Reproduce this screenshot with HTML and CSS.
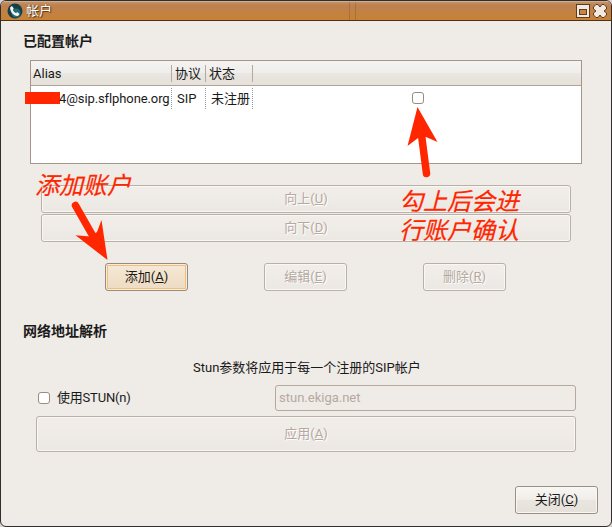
FILE: index.html
```html
<!DOCTYPE html>
<html lang="zh-CN">
<head>
<meta charset="utf-8">
<title>帐户</title>
<link rel="stylesheet" href="styles.css">
</head>
<body>
<div class="window">
  <header class="titlebar">
    <svg class="logo" width="16" height="16" viewBox="0 0 16 16"><circle cx="8" cy="8" r="7.5" fill="#153e48"/><circle cx="9" cy="10" r="4.5" fill="#286b73"/><path d="M3.2 4.2 5 3l1.8 2.4-1 1.5c.6 1.4 1.7 2.5 3 3.2l1.7-.9 2 1.9-1.6 1.8C7 13.300 2.500 8.500 3.200 4.200Z" fill="#f2f7f5"/></svg>
    <span class="title">帐户</span>
    <svg class="controls" width="32" height="15" viewBox="0 0 32 15"><rect x=".5" y=".5" width="13" height="13" fill="#efe9e2" stroke="#603b1b"/><rect x="3.500" y="5.500" width="7" height="5" fill="#c78442" stroke="#603b1b"/><path d="M20 .5h2L24 3l2-2.500h2L30.500 3v2L28 7l2.500 2v2L28 13.500h-2L24 11l-2 2.500h-2L17.500 11V9L20 7l-2.500-2V3Z" fill="#efe9e2" stroke="#603b1b" stroke-linejoin="round"/></svg>
  </header>
  <main class="content">
    <h2 class="heading">已配置帐户</h2>
    <section class="accounts">
      <div class="row head"><span>Alias</span><span>协议</span><span>状态</span><span></span></div>
      <div class="row entry"><span class="alias"><i class="redaction"></i>4@sip.sflphone.org</span><span>SIP</span><span>未注册</span><span class="enabled"><i class="check"></i></span></div>
    </section>
    <div class="order">
      <button class="button disabled">向上(<u>U</u>)</button>
      <button class="button disabled">向下(<u>D</u>)</button>
    </div>
    <div class="actions">
      <button class="button focused">添加(<u>A</u>)</button>
      <button class="button disabled">编辑(<u>E</u>)</button>
      <button class="button disabled">删除(<u>R</u>)</button>
    </div>
    <h2 class="heading">网络地址解析</h2>
    <p class="hint">Stun参数将应用于每一个注册的SIP帐户</p>
    <div class="stun"><i class="check"></i><span class="stun-label">使用STUN(n)</span><div class="field">stun.ekiga.net</div></div>
    <button class="button disabled apply">应用(<u>A</u>)</button>
    <button class="button close">关闭(<u>C</u>)</button>
  </main>
  <div class="note note-add">添加账户</div>
  <div class="note note-check">勾上后会进<br>行账户确认</div>
  <svg class="arrows" width="612" height="527" viewBox="0 0 612 527"><path d="M75.500 205.500 94 238M426.500 173.500 421.500 135" stroke="#ff2600" stroke-width="7.500" stroke-linecap="round"/><path d="M107.500 260 75.500 235.300 90 236.500 97 232 101.500 220ZM417.500 107 437.500 142 426 137 418 138 407.500 146Z" fill="#ff2600"/></svg>
</div>
</body>
</html>
```
FILE: styles.css
```css
* { box-sizing: border-box; }
body { margin: 0; background: #d9d4ce; font: 13px/16px Roboto, "Noto Sans CJK SC", sans-serif; color: #1a1a1a; }
i { font-style: normal; }
.window { position: relative; width: 612px; height: 527px; border: 1px solid #302e2e; border-radius: 6px; background: #efebe7; overflow: hidden; }
.titlebar { height: 20px; padding: 0 3px 0 6px; display: flex; align-items: center; background: linear-gradient(90deg, transparent 348px, #0002 348px 349px, transparent 349px 354px, #0002 354px 355px, transparent 355px), linear-gradient(#c4946a 0, #bc8150 3px, #c88235 100%); border-top: 1px solid #d1ad8d; border-bottom: 1px solid #513013; }
.title { margin-left: 3px; color: #fff; text-shadow: 1px 1px 1px #5b3513, 0 0 1px #5b3513; }
.controls { margin-left: auto; }
.content { display: flex; flex-direction: column; padding: 12px 13px 0 22px; }
.heading { margin: 0; height: 16px; font-size: 14px; line-height: 16px; font-weight: bold; }
.accounts { margin: 11px 0 0 7px; width: 552px; height: 104px; background: #fff; border: 1px solid #a69688; }
.row { display: grid; grid-template-columns: 141px 34px 47px 1fr; align-items: center; }
.row span { height: 17px; line-height: 17px; white-space: nowrap; }
.head { height: 25px; background: linear-gradient(#f5f3f1, #f0eeeb 50%, #eae6e1 50%, #e5e0da); border-bottom: 1px solid #b0a297; }
.head span { padding-left: 2px; border-right: 1px solid #b5a89c; }
.head span:nth-child(n+2) { padding-left: 3px; }
.head span:last-child { border: 0; }
.entry { height: 24px; }
.entry span { height: 21px; line-height: 21px; padding-left: 5px; border-right: 1px dotted #999; }
.entry .alias { display: flex; align-items: center; padding: 0; margin-left: -6px; letter-spacing: -.1px; }
.redaction { flex: none; width: 35px; height: 12px; margin-right: -1px; background: #ff2600; }
.entry .enabled { display: flex; justify-content: center; align-items: center; border: 0; padding-left: 2px; }
.check { flex: none; width: 12px; height: 12px; border: 1px solid #9a8b80; border-radius: 3px; background: #fff; }
.button { height: 28px; padding: 0; border: 1px solid #9b9085; border-radius: 3px; background: linear-gradient(#f8f6f4, #f0ede9 50%, #e9e5df 50%, #e5e0da); box-shadow: inset 0 0 0 1px #f9f7f4; font: inherit; color: #1a1a1a; }
.disabled { color: #b5a99f; border-color: #bbb0a7; background: linear-gradient(#f1eeea, #efebe7 50%, #ebe7e3); text-shadow: 1px 1px #fff; }
.order { display: flex; flex-direction: column; gap: 1px; width: 530px; margin: 21px 0 0 18px; }
.actions { display: flex; gap: 76px; margin: 21px 0 32px 82px; }
.actions .button { width: 83px; }
.focused { background: linear-gradient(#f6e9d9, #f2e2cb 50%, #eddbc2); border-color: #968b80; box-shadow: inset 0 0 0 1px #f5eee5, inset 0 0 0 2px #f4bd72; }
.hint { margin: 21px 0 9px; padding-left: 170px; white-space: nowrap; }
.stun { display: flex; align-items: center; height: 26px; padding-left: 15px; }
.stun-label { margin-left: 7px; width: 218px; letter-spacing: -.2px; }
.field { width: 301px; height: 26px; border: 1px solid #b5a89c; border-radius: 3px; padding: 4px 3px; color: #b5a99f; }
.apply { width: 540px; height: 36px; margin: 5px 0 0 13px; }
.close { width: 83px; margin-top: 34px; align-self: flex-end; }
.note { position: absolute; color: #ff2600; font-size: 24px; line-height: 29px; font-style: italic; white-space: nowrap; -webkit-text-stroke: .2px #ff2600; }
.note-add { left: 34px; top: 171px; }
.note-check { left: 398px; top: 187px; }
.arrows { position: absolute; left: -1px; top: -1px; pointer-events: none; }
```
